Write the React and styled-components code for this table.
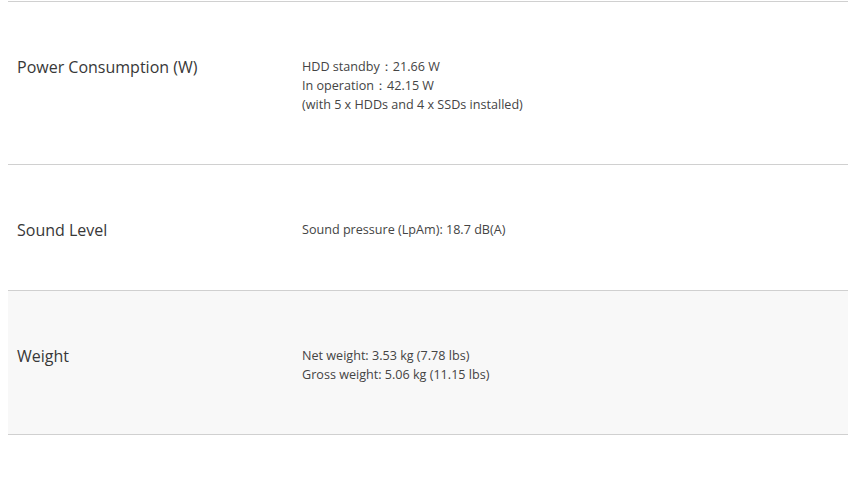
import React from "react";
import styled, { createGlobalStyle } from "styled-components";

const GlobalStyle = createGlobalStyle`
  body {
    margin: 0 0 0 8px;
    background: #fff;
    font-family: "Open Sans", "Liberation Sans", sans-serif;
  }
`;

const specs = [
  {
    label: "Power Consumption (W)",
    lines: [
      "HDD standby：21.66 W",
      "In operation：42.15 W",
      "(with 5 x HDDs and 4 x SSDs installed)",
    ],
  },
  { label: "Sound Level", lines: ["Sound pressure (LpAm): 18.7 dB(A)"] },
  {
    label: "Weight",
    lines: ["Net weight: 3.53 kg (7.78 lbs)", "Gross weight: 5.06 kg (11.15 lbs)"],
    shaded: true,
  },
];

const App = () => {
  return (
    <>
      <GlobalStyle />
      <Table>
        {specs.map((item) => (
          <Row key={item.label} $shaded={item.shaded}>
            <Label>{item.label}</Label>
            <Value>
              {item.lines.map((line) => (
                <div key={line}>{line}</div>
              ))}
            </Value>
          </Row>
        ))}
      </Table>
    </>
  );
};

const Table = styled.div`
  margin-top: 1px;
  border-top: 1px solid #d0d0d0;
`;

const Row = styled.div`
  display: grid;
  grid-template-columns: 285px 1fr;
  padding: 55px 0 50px 9px;
  border-bottom: 1px solid #d0d0d0;
  background: ${({ $shaded }) => ($shaded ? "#f8f8f8" : "#fff")};
`;

const Label = styled.div`
  font-size: 16px;
  line-height: 20px;
  color: #383838;
`;

const Value = styled.div`
  font-size: 12.6px;
  line-height: 19px;
  color: #444;
`;

export default App;
